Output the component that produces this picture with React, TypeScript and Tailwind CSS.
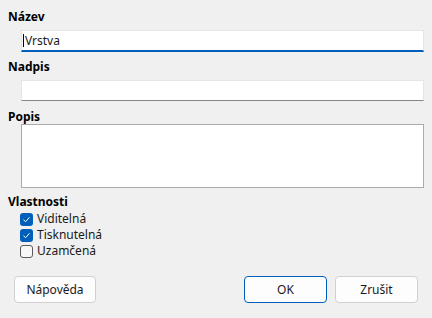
import type { ReactNode } from "react";

const font = { fontFamily: '"Segoe UI", "Noto Sans", sans-serif' };

function Label({ children, className = "" }: { children: ReactNode; className?: string }) {
  return (
    <div className={`h-4 text-[12px] leading-4 font-bold text-[#000] ${className}`}>{children}</div>
  );
}

function Check({ label, checked }: { label: string; checked: boolean }) {
  return (
    <div className="flex h-4 items-center gap-[4px] pl-[12px] text-[12px] text-[#1a1a1a]">
      {checked ? (
        <span className="flex h-[13px] w-[13px] items-center justify-center rounded-[3px] bg-[#005fb8]">
          <svg width="9" height="9" viewBox="0 0 9 9" fill="none">
            <path d="M1.5 4.7 L3.6 6.7 L7.5 2.3" stroke="#fff" strokeWidth="1" />
          </svg>
        </span>
      ) : (
        <span className="h-[13px] w-[13px] rounded-[3px] border border-[#5a5a5a] bg-[#f7f7f7]" />
      )}
      <span>{label}</span>
    </div>
  );
}

export default function App() {
  return (
    <div className="h-[318px] w-[432px] bg-[#f0f0f0] pl-2 pt-[9px]" style={font}>
      <Label>Název</Label>
      <div className="ml-[13px] mt-[5px] flex h-[22px] w-[403px] items-center border border-b-2 border-[#e5e5e5] border-b-[#005fb8] bg-white pl-[1px] text-[12px] text-[#1a1a1a]">
        <span className="mr-[1px] h-[13px] w-px bg-black" />
        Vrstva
      </div>
      <Label className="mt-[7px]">Nadpis</Label>
      <div className="ml-[13px] mt-[5px] h-[21px] w-[403px] border border-[#e5e5e5] border-b-[#868686] bg-white" />
      <Label className="mt-[8px]">Popis</Label>
      <div className="ml-[13px] -mt-px h-[64px] w-[403px] border border-[#ababab] bg-white" />
      <Label className="mt-[6px]">Vlastnosti</Label>
      <div className="mt-[1px]">
        <Check label="Viditelná" checked />
        <Check label="Tisknutelná" checked />
        <Check label="Uzamčená" checked={false} />
      </div>
      <div className="mt-[17px] flex pr-[14px]">
        <button className="ml-[6px] h-[27px] w-[82px] rounded-[4px] border border-[#d0d0d0] bg-[#fdfdfd] text-[12px] text-[#1a1a1a]">
          Nápověda
        </button>
        <div className="flex-1" />
        <button className="h-[27px] w-[83px] rounded-[4px] border border-[#005fb8] bg-[#fdfdfd] text-[12px] text-[#1a1a1a]">
          OK
        </button>
        <button className="ml-[8px] h-[27px] w-[83px] rounded-[4px] border border-[#d0d0d0] bg-[#fdfdfd] text-[12px] text-[#1a1a1a]">
          Zrušit
        </button>
      </div>
    </div>
  );
}
